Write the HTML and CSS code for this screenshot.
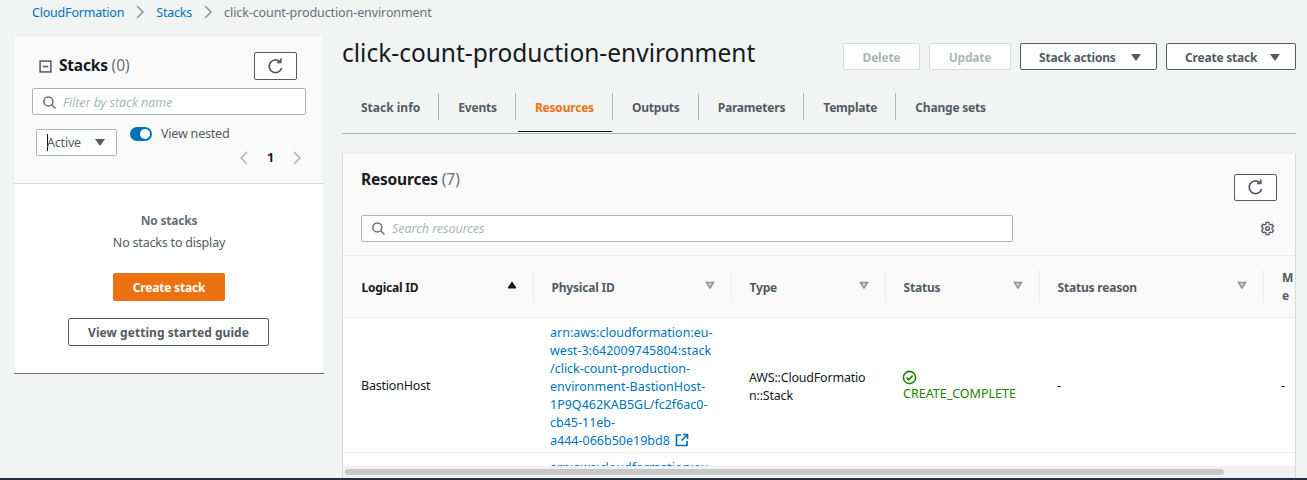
FILE: index.html
```html
<!DOCTYPE html>
<html lang="en">
<head>
    <meta charset="UTF-8">
    <title>click-count-production-environment</title>
    <link rel="stylesheet" href="styles.css">
</head>
<body>
    <nav class="breadcrumb">
        <a href="#">CloudFormation</a>
        <svg class="crumb-sep" viewBox="0 0 10 14"><path d="M2 1l6 6-6 6"/></svg>
        <a href="#">Stacks</a>
        <svg class="crumb-sep" viewBox="0 0 10 14"><path d="M2 1l6 6-6 6"/></svg>
        <span class="crumb-current">click-count-production-environment</span>
    </nav>

    <div class="layout">
        <aside class="sidebar">
            <div class="side-head">
                <div class="side-title-row">
                    <svg class="collapse-icon" viewBox="0 0 12 12"><rect x="1" y="1" width="10" height="10"/><path d="M3.500 6h5"/></svg>
                    <h2>Stacks <span class="count">(0)</span></h2>
                    <button class="btn refresh-btn side-refresh">
                        <svg class="refresh-icon" viewBox="0 0 16 16"><path d="M13.800 9.500A6 6 0 1 1 12 3.300"/><path d="M13 0.500v3.600H9.400"/></svg>
                    </button>
                </div>
                <div class="search-box side-search">
                    <svg class="search-icon" viewBox="0 0 16 16"><circle cx="6.800" cy="6.800" r="4.800"/><path d="M10.400 10.400l4 4"/></svg>
                    <span>Filter by stack name</span>
                </div>
                <div class="filter-row">
                    <div class="select"><span class="caret"></span>Active<i class="tri"></i></div>
                    <div class="filter-right">
                        <div class="nested"><span class="toggle"></span><span class="nested-label">View nested</span></div>
                        <div class="pager">
                            <svg class="pager-arrow" viewBox="0 0 10 14"><path d="M8 1L2 7l6 6"/></svg>
                            <b>1</b>
                            <svg class="pager-arrow" viewBox="0 0 10 14"><path d="M2 1l6 6-6 6"/></svg>
                        </div>
                    </div>
                </div>
            </div>
            <div class="side-empty">
                <strong>No stacks</strong>
                <p>No stacks to display</p>
                <button class="btn btn-primary">Create stack</button>
                <button class="btn guide-btn">View getting started guide</button>
            </div>
        </aside>

        <main class="main">
            <div class="title-row">
                <h1>click-count-production-environment</h1>
                <div class="actions">
                    <button class="btn btn-disabled delete-btn">Delete</button>
                    <button class="btn btn-disabled update-btn">Update</button>
                    <button class="btn menu-btn stack-actions">Stack actions<i class="tri"></i></button>
                    <button class="btn menu-btn create-btn">Create stack<i class="tri"></i></button>
                </div>
            </div>

            <div class="tabs">
                <a href="#" class="tab">Stack info</a>
                <a href="#" class="tab">Events</a>
                <a href="#" class="tab active">Resources</a>
                <a href="#" class="tab">Outputs</a>
                <a href="#" class="tab">Parameters</a>
                <a href="#" class="tab">Template</a>
                <a href="#" class="tab">Change sets</a>
            </div>

            <section class="panel">
                <div class="panel-head">
                    <div class="panel-title-row">
                        <h2>Resources <span class="count">(7)</span></h2>
                        <button class="btn refresh-btn panel-refresh">
                            <svg class="refresh-icon" viewBox="0 0 16 16"><path d="M13.800 9.500A6 6 0 1 1 12 3.300"/><path d="M13 0.500v3.600H9.400"/></svg>
                        </button>
                    </div>
                    <div class="panel-search-row">
                        <div class="search-box panel-search">
                            <svg class="search-icon" viewBox="0 0 16 16"><circle cx="6.800" cy="6.800" r="4.800"/><path d="M10.400 10.400l4 4"/></svg>
                            <span>Search resources</span>
                        </div>
                        <svg class="gear" viewBox="0 0 16 16">
                            <path d="M6.600 1.500h2.800l.4 1.900 1.200.7 1.900-.6 1.400 2.400-1.500 1.300v1.600l1.500 1.300-1.400 2.400-1.900-.6-1.200.7-.4 1.900H6.600l-.4-1.900-1.200-.7-1.900.6-1.400-2.400 1.500-1.300V7.200L1.700 5.900l1.400-2.400 1.900.6 1.200-.7z"/>
                            <circle cx="8" cy="8" r="2"/>
                        </svg>
                    </div>
                </div>

                <div class="table-wrap">
                    <table class="res-table">
                        <colgroup>
                            <col class="col-logical"><col class="col-physical"><col class="col-type"><col class="col-status"><col class="col-reason"><col class="col-module">
                        </colgroup>
                        <thead>
                            <tr>
                                <th class="sorted"><div class="th-inner">Logical ID<svg class="sort sort-on" viewBox="0 0 10 8"><path d="M5 1l4 6H1z"/></svg></div></th>
                                <th><div class="th-inner">Physical ID<svg class="sort" viewBox="0 0 10 8"><path d="M1.500 1.500h7L5 7z"/></svg></div></th>
                                <th><div class="th-inner">Type<svg class="sort" viewBox="0 0 10 8"><path d="M1.500 1.500h7L5 7z"/></svg></div></th>
                                <th><div class="th-inner">Status<svg class="sort" viewBox="0 0 10 8"><path d="M1.500 1.500h7L5 7z"/></svg></div></th>
                                <th><div class="th-inner">Status reason<svg class="sort" viewBox="0 0 10 8"><path d="M1.500 1.500h7L5 7z"/></svg></div></th>
                                <th><div class="th-inner th-narrow">M<br>e</div></th>
                            </tr>
                        </thead>
                        <tbody>
                            <tr>
                                <td>BastionHost</td>
                                <td class="arn"><a href="#">arn:aws:cloudformation:eu-<br>west-3:642009745804:stack<br>/click-count-production-<br>environment-BastionHost-<br>1P9Q462KAB5GL/fc2f6ac0-<br>cb45-11eb-<br>a444-066b50e19bd8</a><svg class="ext" viewBox="0 0 14 14"><path d="M6 2H1.500v10.500H12V8"/><path d="M8 1.500h4.500V6M12.500 1.500L6.500 7.500"/></svg></td>
                                <td class="break">AWS::CloudFormation::Stack</td>
                                <td class="status">
                                    <svg class="check" viewBox="0 0 16 16"><circle cx="8" cy="8" r="6.500"/><path d="M4.800 8.200l2.300 2.300 4.200-4.500"/></svg>
                                    <div>CREATE_COMPLETE</div>
                                </td>
                                <td>-</td>
                                <td>-</td>
                            </tr>
                            <tr>
                                <td></td>
                                <td class="arn"><a href="#">arn:aws:cloudformation:eu-</a></td>
                                <td></td><td></td><td></td><td></td>
                            </tr>
                        </tbody>
                    </table>
                </div>
                <div class="scrollbar"><div class="thumb"></div></div>
            </section>
        </main>
    </div>
    <div class="bottom-strip"></div>
</body>
</html>
```

FILE: styles.css
```css
* {
    box-sizing: border-box;
}
html, body {
    height: 480px;
    overflow: hidden;
}
body {
    margin: 0;
    display: flex;
    flex-direction: column;
    background-color: #f2f3f3;
    color: #16191f;
    font-family: "Noto Sans", Arial, sans-serif;
    font-size: 12.500px;
    letter-spacing: -0.2px;
}
a {
    color: #0073bb;
    text-decoration: none;
}
h1, h2, p {
    margin: 0;
    font-weight: normal;
}
i {
    font-style: normal;
}
svg {
    fill: none;
    flex: none;
}

/* breadcrumb */
.breadcrumb {
    height: 35px;
    flex: none;
    padding: 0 0 11px 32px;
    display: flex;
    align-items: center;
    color: #687078;
}
.crumb-current {
    letter-spacing: -0.1px;
}
.crumb-sep {
    width: 10px;
    height: 14px;
    margin: 0 11px;
    stroke: #879596;
    stroke-width: 1.500;
}

.layout {
    flex: 1;
    min-height: 0;
    display: grid;
    grid-template-columns: 310px 954px;
    column-gap: 18px;
    padding-left: 14px;
}

/* buttons */
.btn {
    display: inline-flex;
    align-items: center;
    justify-content: center;
    height: 27px;
    padding: 1px 0 0;
    background: #fff;
    border: 1px solid #545b64;
    border-radius: 2px;
    color: #545b64;
    font-family: inherit;
    font-size: 12px;
    font-weight: 700;
    letter-spacing: -0.2px;
}
.btn-primary {
    width: 112px;
    height: 28px;
    background: #ec7211;
    border-color: #ec7211;
    color: #fff;
}
.btn-disabled {
    background: #fff;
    border-color: #d5dbdb;
    color: #aab7b8;
}
.refresh-btn {
    width: 43px;
    padding: 0;
}
.refresh-icon {
    width: 17px;
    height: 17px;
    stroke: #545b64;
    stroke-width: 1.600;
}
.tri {
    display: inline-block;
    width: 0;
    height: 0;
    border-left: 5px solid transparent;
    border-right: 5px solid transparent;
    border-top: 7px solid #545b64;
}

/* search */
.search-box {
    display: flex;
    align-items: center;
    height: 27px;
    background: #fff;
    border: 1px solid #aab7b8;
    border-radius: 2px;
    color: #aab7b8;
    font-style: italic;
    letter-spacing: -0.05px;
}
.search-icon {
    width: 15px;
    height: 15px;
    margin: 0 6px 0 9px;
    stroke: #687078;
    stroke-width: 1.600;
}

/* left column */
.sidebar {
    height: 339px;
    display: flex;
    flex-direction: column;
    border-bottom: 1px solid #687078;
}
.side-head {
    height: 149px;
    flex: none;
    margin-left: -1px;
    padding: 16px 18px 0;
    background: #fafafa;
    border: 1px solid #eaeded;
    border-bottom-color: #d5dbdb;
}
.side-title-row {
    display: flex;
    align-items: flex-start;
    padding-left: 7px;
}
.collapse-icon {
    width: 13px;
    height: 13px;
    margin: 8px 7px 0 0;
    stroke: #545b64;
    stroke-width: 1.400;
}
.side-title-row h2 {
    margin-top: 1px;
    font-size: 15.500px;
    font-weight: 700;
    line-height: 25px;
}
.count {
    color: #687078;
    font-weight: normal;
    letter-spacing: 0;
}
.side-refresh {
    height: 28px;
    margin: 0 8px 0 auto;
}
.side-search {
    width: 274px;
    margin-top: 8px;
    padding-top: 1px;
}
.filter-row {
    display: flex;
    margin-top: 11px;
    padding-left: 4px;
}
.select {
    width: 81px;
    height: 27px;
    margin-top: 3px;
    padding-left: 10px;
    display: flex;
    align-items: center;
    background: #fff;
    border: 1px solid #aab7b8;
    border-radius: 2px;
    color: #545b64;
}
.caret {
    width: 1px;
    height: 17px;
    margin-right: -1px;
    background: #16191f;
}
.select .tri {
    margin-left: auto;
    margin-right: 11px;
}
.filter-right {
    margin-left: 13px;
    flex: 1;
}
.nested {
    display: flex;
    align-items: center;
    color: #545b64;
    line-height: 14px;
}
.nested-label {
    padding-top: 1px;
}
.toggle {
    position: relative;
    width: 22px;
    height: 14px;
    margin-right: 9px;
    background: #0073bb;
    border-radius: 7px;
}
.toggle::after {
    content: "";
    position: absolute;
    top: 2px;
    right: 2px;
    width: 10px;
    height: 10px;
    background: #fff;
    border-radius: 50%;
}
.pager {
    display: flex;
    align-items: center;
    justify-content: flex-end;
    margin: 8px 3px 0 0;
    gap: 18px;
}
.pager-arrow {
    width: 10px;
    height: 14px;
    stroke: #aab7b8;
    stroke-width: 1.500;
}
.side-empty {
    flex: 1;
    display: flex;
    flex-direction: column;
    align-items: center;
    margin: 0 1px;
    padding-top: 28px;
    background: #fff;
    color: #687078;
}
.side-empty strong {
    font-size: 12px;
    line-height: 18px;
}
.side-empty p {
    margin-top: 4px;
    line-height: 18px;
    color: #545b64;
}
.side-empty .btn-primary {
    margin-top: 21px;
}
.guide-btn {
    width: 201px;
    height: 28px;
    margin: 17px 1px 0 0;
    letter-spacing: 0.05px;
}

/* right column */
.main {
    min-width: 0;
    height: 443px;
    display: flex;
    flex-direction: column;
}
.title-row {
    display: flex;
    align-items: flex-start;
    height: 58px;
    flex: none;
}
.title-row h1 {
    font-size: 24.500px;
    line-height: 36px;
    letter-spacing: 0;
}
.actions {
    margin-left: auto;
    margin-top: 8px;
    display: flex;
    gap: 9px;
}
.delete-btn {
    width: 77px;
}
.update-btn {
    width: 82px;
}
.menu-btn {
    justify-content: flex-start;
    padding-left: 18px;
}
.menu-btn .tri {
    margin-left: auto;
    margin-right: 15px;
}
.stack-actions {
    width: 137px;
}
.create-btn {
    width: 130px;
}

/* tabs */
.tabs {
    display: flex;
    height: 41px;
    flex: none;
    border-bottom: 1px solid #aab7b8;
}
.tab {
    position: relative;
    display: flex;
    align-items: center;
    height: 27px;
    padding: 2px 18px 0 19px;
    color: #545b64;
    font-size: 12px;
    font-weight: 700;
    border-right: 1px solid #aab7b8;
}
.tab:first-child {
    letter-spacing: 0;
}
.tab:last-child {
    border-right: none;
}
.tab.active {
    color: #ec7211;
}
.tab.active::after {
    content: "";
    position: absolute;
    left: 2px;
    right: 0;
    top: 38px;
    height: 1px;
    background: #16191f;
}

/* resources panel */
.panel {
    flex: 1;
    min-height: 0;
    margin-top: 19px;
    display: flex;
    flex-direction: column;
    background: #fff;
    border: 1px solid #eaeded;
    border-bottom: none;
    border-left-color: #d5dbdb;
    border-right-color: #d5dbdb;
    overflow: hidden;
}
.panel-head {
    height: 102px;
    flex: none;
    padding: 13px 18px 0;
    background: #fafafa;
    border-bottom: 1px solid #eaeded;
}
.panel-title-row {
    position: relative;
    height: 48px;
}
.panel-title-row h2 {
    font-size: 15.500px;
    font-weight: 700;
    line-height: 25px;
}
.panel-refresh {
    position: absolute;
    right: 0;
    top: 7px;
}
.panel-search-row {
    display: flex;
    align-items: center;
}
.panel-search {
    width: 652px;
}
.gear {
    width: 15px;
    height: 15px;
    margin-left: auto;
    margin-right: 2px;
    stroke: #545b64;
    stroke-width: 1.500;
}
.table-wrap {
    flex: 1;
    min-height: 0;
    overflow: hidden;
}
.res-table {
    width: 953px;
    table-layout: fixed;
    border-collapse: collapse;
}
.col-logical { width: 190px; }
.col-physical { width: 198px; }
.col-type { width: 154px; }
.col-status { width: 154px; }
.col-reason { width: 224px; }
.col-module { width: 33px; }
.res-table th {
    height: 61px;
    padding: 0;
    background: #fafafa;
    border-bottom: 1px solid #eaeded;
    color: #545b64;
    font-size: 12px;
    font-weight: 700;
    text-align: left;
}
.res-table th.sorted {
    color: #16191f;
}
.th-inner {
    position: relative;
    height: 31px;
    margin-right: -1px;
    display: flex;
    align-items: center;
    padding: 2px 17px 0 18.500px;
    border-right: 1px solid #eaeded;
}
th:last-child .th-inner {
    display: block;
    border-right: none;
}
.th-narrow {
    padding: 0 0 0 19px;
    line-height: 18px;
    margin-top: -3px;
}
.sort {
    position: absolute;
    right: 16px;
    top: 10px;
    width: 10px;
    height: 8px;
    fill: #d5dbdb;
    stroke: #879596;
    stroke-width: 1.500;
}
.sort-on {
    fill: #16191f;
    stroke: #16191f;
    stroke-width: 1;
}
.res-table td {
    padding: 5px 18px 3px;
    border-bottom: 1px solid #eaeded;
    color: #16191f;
    line-height: 18px;
    vertical-align: middle;
}
.res-table td.arn {
    padding: 6px 0 2px 17px;
    white-space: nowrap;
    letter-spacing: 0;
}
.res-table td.break {
    padding: 6px 18px 2px;
    word-break: break-all;
}
.ext {
    width: 14px;
    height: 14px;
    margin-left: 5px;
    vertical-align: -2px;
    stroke: #0073bb;
    stroke-width: 1.700;
}
.res-table td.status {
    padding: 6px 18px 2px;
    color: #1d8102;
    letter-spacing: 0;
}
.check {
    display: block;
    width: 15px;
    height: 15px;
    margin-left: -1px;
    stroke: #1d8102;
    stroke-width: 1.700;
}

/* horizontal scrollbar of the table */
.scrollbar {
    height: 12px;
    flex: none;
    padding: 3px 0 0 2px;
    background: #f1f1f1;
}
.thumb {
    width: 879px;
    height: 6px;
    background: #c8c8c8;
    border-radius: 3px;
}
.bottom-strip {
    height: 2px;
    flex: none;
    background: #232f3e;
}
```
